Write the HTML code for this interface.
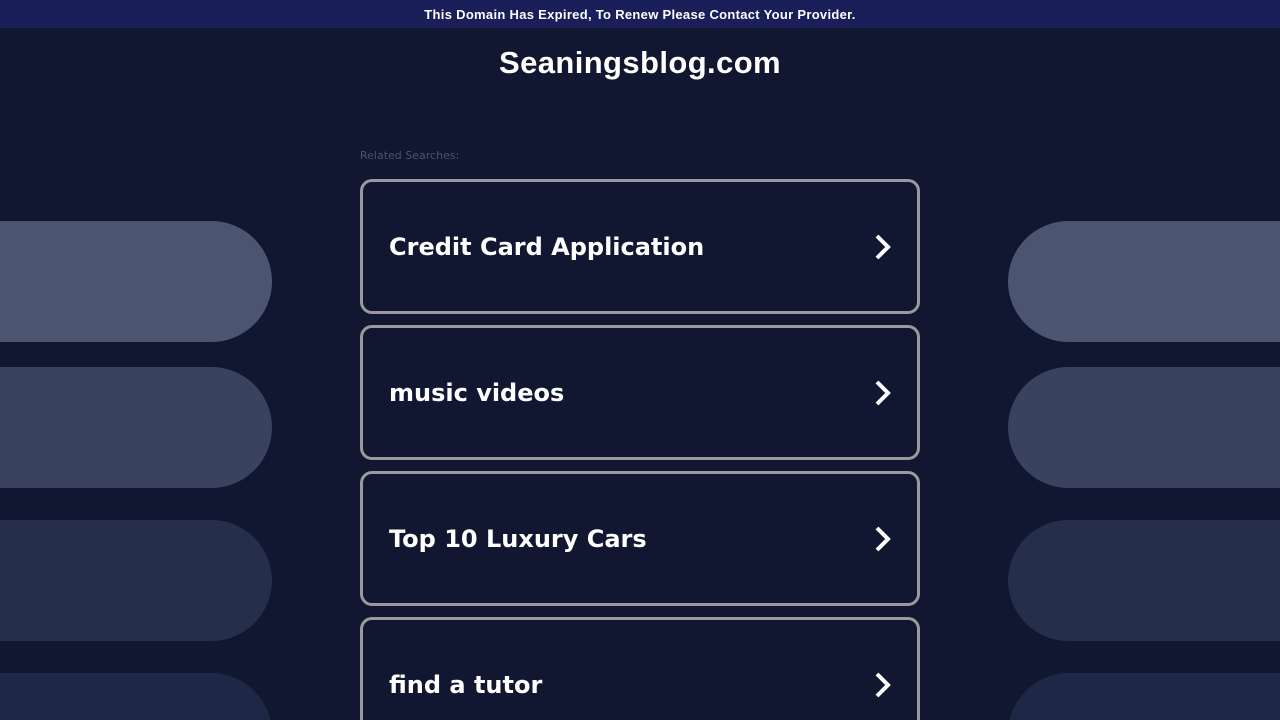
<!DOCTYPE html>
<html><head><style>
html,body{margin:0;width:1280px;height:720px;overflow:hidden}
body{background:#111730;font-family:"Liberation Sans",sans-serif;position:relative}
.top{position:absolute;left:0;top:0;width:1280px;height:28px;background:#1a1f5a;color:#fff;font-size:13px;font-weight:bold;text-align:center;line-height:29px;letter-spacing:0.3px}
h1{position:absolute;top:44px;left:0;width:1280px;text-align:center;margin:0;color:#fff;font-size:31px;font-weight:bold;line-height:38px;letter-spacing:0.4px}
.rel{position:absolute;left:360px;top:149px;font-size:11px;color:#4a5370;font-family:"DejaVu Sans",sans-serif}
.pill{position:absolute;height:121px;border-radius:61px}
.box{position:absolute;left:360px;width:554px;height:129px;border:3px solid #9a9a9e;border-radius:12px;background:#111730}
.box span{position:absolute;left:26px;top:1px;line-height:129px;color:#fff;font-size:24px;font-weight:bold;font-family:"DejaVu Sans",sans-serif}
.box svg{position:absolute;left:510px;top:51px}
</style></head><body>
<div class="top">This Domain Has Expired, To Renew Please Contact Your Provider.</div>
<h1>Seaningsblog.com</h1>
<div class="pill" style="left:-100px;width:372px;top:221px;background:#4b5571"></div>
<div class="pill" style="left:-100px;width:372px;top:367px;background:#394360"></div>
<div class="pill" style="left:-100px;width:372px;top:520px;background:#252e4b"></div>
<div class="pill" style="left:-100px;width:372px;top:673px;background:#1f2746"></div>
<div class="pill" style="left:1008px;width:400px;top:221px;background:#4b5571"></div>
<div class="pill" style="left:1008px;width:400px;top:367px;background:#394360"></div>
<div class="pill" style="left:1008px;width:400px;top:520px;background:#252e4b"></div>
<div class="pill" style="left:1008px;width:400px;top:673px;background:#1f2746"></div>
<div class="rel">Related Searches:</div>
<div class="box" style="top:179px"><span>Credit Card Application</span><svg width="20" height="28" viewBox="0 0 20 28"><path d="M4 3 L15 14 L4 25" stroke="#fff" stroke-width="4" fill="none"/></svg></div>
<div class="box" style="top:325px"><span>music videos</span><svg width="20" height="28" viewBox="0 0 20 28"><path d="M4 3 L15 14 L4 25" stroke="#fff" stroke-width="4" fill="none"/></svg></div>
<div class="box" style="top:471px"><span>Top 10 Luxury Cars</span><svg width="20" height="28" viewBox="0 0 20 28"><path d="M4 3 L15 14 L4 25" stroke="#fff" stroke-width="4" fill="none"/></svg></div>
<div class="box" style="top:617px"><span>find a tutor</span><svg width="20" height="28" viewBox="0 0 20 28"><path d="M4 3 L15 14 L4 25" stroke="#fff" stroke-width="4" fill="none"/></svg></div>
</body></html>
